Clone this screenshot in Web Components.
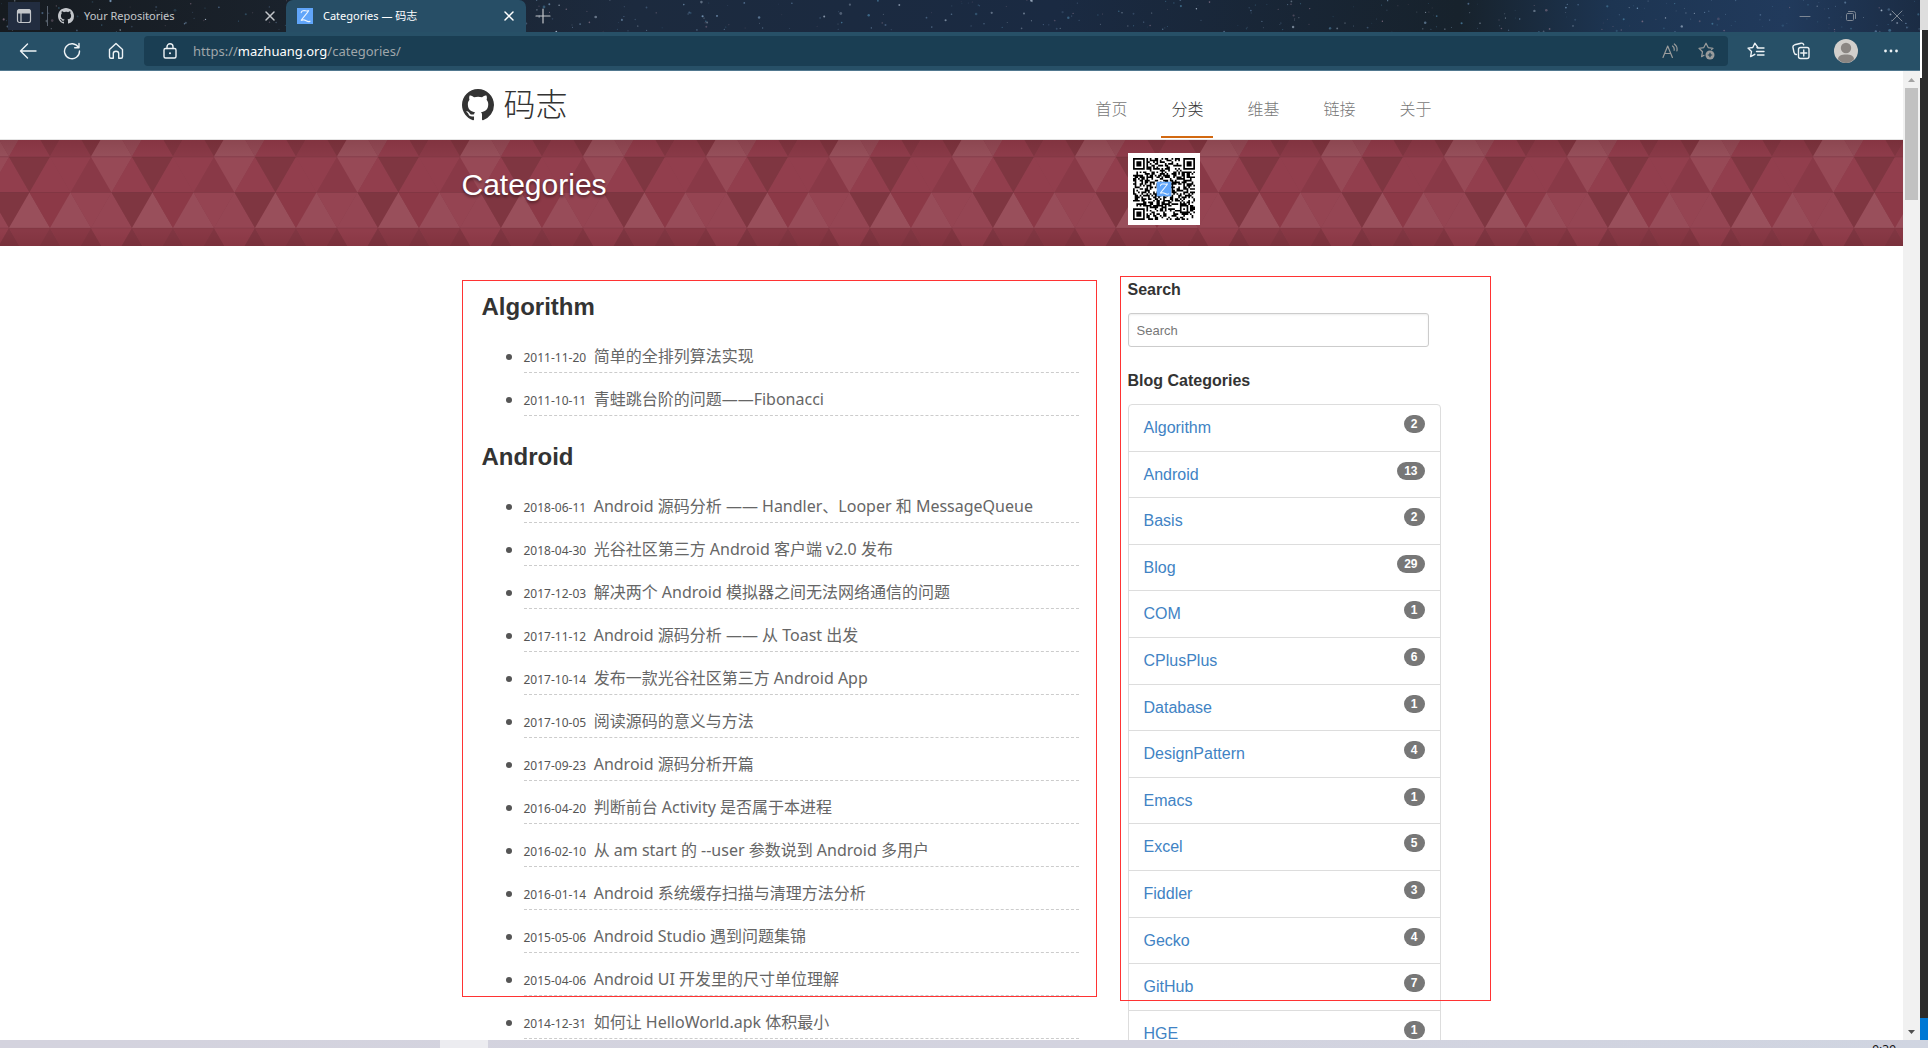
<!DOCTYPE html>
<html lang="zh-CN">
<head>
<meta charset="utf-8">
<title>Categories — 码志</title>
<style>
  html, body { margin: 0; height: 100%; overflow: hidden; background: #2b2b2b; }
  body { font-family: "Liberation Sans", "Noto Sans CJK SC", sans-serif; color: #333; }
</style>
</head>
<body>
<desktop-screen>
  <browser-window></browser-window>
</desktop-screen>

<script>
const UI_FONT = '"Noto Sans", "Noto Sans CJK SC", sans-serif';
const BASE = `*{box-sizing:border-box} button{all:unset;box-sizing:border-box;cursor:pointer;display:flex;align-items:center;justify-content:center} svg{display:block;flex:none}`;

function define(name, render) {
  customElements.define(name, class extends HTMLElement {
    constructor() { super(); this.attachShadow({ mode: 'open' }); }
    connectedCallback() {
      const t = document.createElement('template');
      t.innerHTML = render(this);
      this.shadowRoot.replaceChildren(t.content.cloneNode(true));
    }
  });
}

function random(seed) {
  return () => { seed = (seed * 1664525 + 1013904223) % 4294967296; return seed / 4294967296; };
}

/* ---------- icons ---------- */
const line = (body, w = 1.2) => `<g fill="none" stroke="currentColor" stroke-width="${w}" stroke-linecap="round" stroke-linejoin="round">${body}</g>`;
const ICONS = {
  github: [16, '<path fill="currentColor" d="M8 0C3.58 0 0 3.58 0 8c0 3.54 2.29 6.53 5.47 7.59.4.07.55-.17.55-.38 0-.19-.01-.82-.01-1.49-2.01.37-2.53-.49-2.69-.94-.09-.23-.48-.94-.82-1.13-.28-.15-.68-.52-.01-.53.63-.01 1.08.58 1.23.82.72 1.21 1.87.87 2.33.66.07-.52.28-.87.51-1.07-1.78-.2-3.64-.89-3.64-3.95 0-.87.31-1.59.82-2.15-.08-.2-.36-1.02.08-2.12 0 0 .67-.21 2.2.82.64-.18 1.32-.27 2-.27s1.36.09 2 .27c1.53-1.04 2.2-.82 2.2-.82.44 1.1.16 1.92.08 2.12.51.56.82 1.27.82 2.15 0 3.07-1.87 3.75-3.65 3.95.29.25.54.73.54 1.48 0 1.07-.01 1.93-.01 2.2 0 .21.15.46.55.38A8.01 8.01 0 0 0 16 8c0-4.42-3.58-8-8-8z"/>'],
  site: [16, '<rect width="16" height="16" fill="#60a5fa"/><path d="M4.2 4.6C4.6 2.6 7 2.4 8.6 2.8s2.6.2 3.2-.4C10 5.6 6 9.400 4 12.600c2-1.200 3.600-.8 5.200.2s2.600 1.200 3.800.4" fill="none" stroke="#eaf4ff" stroke-width="1.100" stroke-linecap="round"/>'],
  tabs: [16, line('<rect x="1.500" y="1.500" width="13" height="13" rx="2"/><path d="M5 5v9.500"/>') + '<path fill="currentColor" d="M1.500 3a2 2 0 0 1 2-2h9a2 2 0 0 1 2 2v2.500h-13z"/>'],
  close: [12, line('<path d="M2 2l8 8M10 2l-8 8"/>', 1.5)],
  plus: [16, line('<path d="M8 1v14M1 8h14"/>')],
  back: [18, line('<path d="M17 9H1.500M8.500 2L1.500 9l7 7"/>', 1.400)],
  refresh: [18, line('<path d="M15.500 5.500A7.500 7.500 0 1 0 16.500 9M16 1.500v4.300h-4.300"/>', 1.400)],
  home: [18, line('<path d="M2.500 7.500L9 1.600l6.500 5.900v7.300c0 1-.5 1.500-1.400 1.500h-2.400V11.500c0-1.600-1-2.300-2.700-2.300s-2.700.7-2.700 2.300v4.800H3.900c-.9 0-1.400-.5-1.400-1.500z"/>', 1.400)],
  lock: [16, line('<rect x="2" y="5.500" width="12" height="9.500" rx="1.500"/><path d="M5 5.500V3.800a3 3 0 0 1 6 0v1.700"/>', 1.400) + '<circle cx="8" cy="10.200" r="1" fill="currentColor"/>'],
  read: [16, line('<path d="M1 14.500L5.700 3l4.700 11.500M2.700 10.500h6"/><path d="M10.500 3c1.500 1 2 2.500 1.600 4.300M12.300 1c2.300 1.600 3.200 4 2.600 7"/>')],
  favadd: [18, line('<path d="M14.500 7.500l1.500-1.200-4.800-.7L9 1.200 6.800 5.600 2 6.300l3.500 3.400-.9 4.900L7 13.300"/>') + '<circle cx="13" cy="13" r="4.500" fill="currentColor"/><path d="M13 10.800v4.400M10.800 13h4.400" stroke="#1a3e53" stroke-width="1.200"/>'],
  favs: [18, line('<path d="M9.800 5.600H11L7.800 1.200 5.800 5.500 1 6.100l3.500 3.400-.9 5.100 4.200-2.300M10.500 6h6.500M9.500 9.500H17M10.500 13H17"/>', 1.400)],
  collect: [18, line('<path d="M4.500 12.500c-1.700 0-2.200-1-2.500-2.200L1 5.500c-.3-1.500.4-2.300 1.700-2.700L9 1.200c1.500-.3 2.300.2 2.700 1.600"/><rect x="6.500" y="5.500" width="10.500" height="11" rx="2"/><path d="M11.750 8v6M8.750 11h6"/>', 1.400)],
  avatar: [24, '<circle cx="12" cy="12" r="12" fill="#d2cfcc"/><circle cx="12" cy="9" r="5.200" fill="#8b8683"/><path fill="#8b8683" d="M4 20.200c0-3.600 3.500-4.700 8-4.700s8 1.100 8 4.700A12 12 0 0 1 12 24a12 12 0 0 1-8-3.800z"/>'],
  more: [16, '<g fill="currentColor"><circle cx="2.500" cy="8" r="1.400"/><circle cx="8" cy="8" r="1.400"/><circle cx="13.500" cy="8" r="1.400"/></g>'],
  min: [12, line('<path d="M1 6.500h10"/>', 1)],
  restore: [12, line('<rect x="1.500" y="3.500" width="7" height="7" rx="1"/><path d="M3.500 1.500h5a2 2 0 0 1 2 2v5"/>', 1)],
  exit: [12, line('<path d="M1 1l10 10M11 1L1 11"/>', 1)],
};
define('ui-icon', el => {
  const [box, body] = ICONS[el.getAttribute('name')];
  const size = el.getAttribute('size') || box;
  return `<style>:host{display:block;flex:none}svg{display:block}</style>
    <svg width="${size}" height="${size}" viewBox="0 0 ${box} ${box}" aria-hidden="true">${body}</svg>`;
});

/* ---------- desktop ---------- */
define('desktop-screen', () => `<style>${BASE}
  :host{display:flex;flex-direction:column;height:100vh}
  .work{flex:1;min-height:0;display:flex}
  ::slotted(browser-window){flex:1;min-width:0}
  .edge{width:8px;display:flex;flex-direction:column;background:#2b2b2b}
  .edge i:nth-child(1){height:30px;background:#dedede}
  .edge i:nth-child(2){height:48px;width:2px;background:#fff}
  .edge i:nth-child(3){margin-top:auto;height:22px;background:#0078d4}
  </style>
  <div class="work"><slot></slot><div class="edge"><i></i><i></i><i></i></div></div>
  <task-bar></task-bar>`);

define('task-bar', () => `<style>${BASE}
  :host{display:flex;height:8px;overflow:hidden;background:linear-gradient(90deg,#d4d3de,#d3d3df 60%,#d0d5e1);padding-right:32px;justify-content:space-between}
  i{width:48px;margin-left:440px;background:#ececf0}
  time{font:12px/14px ${UI_FONT};color:#111;padding-top:3px}
  </style><i></i><time>9:39</time>`);

/* ---------- browser chrome ---------- */
define('star-field', () => {
  const r = random(77); let s = '';
  for (let i = 0; i < 420; i++) {
    const c = ['#8fb4d8', '#5f7fa3', '#c9d8ea', '#9a7f95', '#4f86a8'][Math.floor(r() * 5)];
    s += `<circle cx="${(r() * 1928).toFixed(1)}" cy="${(r() * 32).toFixed(1)}" r="${(0.4 + r() * r() * 1.1).toFixed(2)}" fill="${c}" opacity="${(0.25 + r() * 0.5).toFixed(2)}"/>`;
  }
  return `<style>:host{display:block;overflow:hidden;background:linear-gradient(90deg,#161b20,#1a222c 15%,#1c2a3e 33%,#1a2a42 55%,#17222c 76%,#1d3552 84%,#213a5c 93%,#1b2c44)}svg{display:block}</style>
    <svg width="1928" height="32" aria-hidden="true">${s}</svg>`;
});

define('browser-tab', el => `<style>${BASE}
  :host{display:flex;align-items:center;height:32px;padding:0 10px;gap:10px;color:#c3c6ca;font:11px/16px ${UI_FONT};width:238px}
  :host([active]){padding:0 11px;background:#274e66;color:#fff;border-radius:7px 7px 0 0;width:240px}
  .t{flex:1;white-space:nowrap}
  </style>
  <ui-icon name="${el.getAttribute('icon')}" size="16"></ui-icon><span class="t"><slot></slot></span>
  <button aria-label="Close tab"><ui-icon name="close"></ui-icon></button>`);

define('tab-strip', () => `<style>${BASE}
  :host{display:flex;position:relative;height:32px;overflow:hidden;color:#c3c6ca}
  star-field{position:absolute;inset:0}
  .row{position:relative;flex:1;display:flex;align-items:center}
  .menu{width:32px;height:28px;margin-left:8px;background:#222d40}
  .sep{width:1px;height:20px;margin:0 0 0 7px;background:#59626e}
  .new{width:34px;height:32px}
  .win{margin-left:auto;display:flex;color:#7d8794}
  .win button{width:46px;height:32px}
  </style>
  <star-field></star-field>
  <div class="row">
    <button class="menu" aria-label="Tab actions"><ui-icon name="tabs"></ui-icon></button><span class="sep"></span>
    <browser-tab icon="github">Your Repositories</browser-tab>
    <browser-tab icon="site" active>Categories — 码志</browser-tab>
    <button class="new" aria-label="New tab"><ui-icon name="plus"></ui-icon></button>
    <div class="win">
      <button aria-label="Minimize"><ui-icon name="min"></ui-icon></button>
      <button aria-label="Restore"><ui-icon name="restore"></ui-icon></button>
      <button aria-label="Close"><ui-icon name="exit"></ui-icon></button>
    </div>
  </div>`);

define('tool-bar', () => `<style>${BASE}
  :host{display:flex;align-items:center;height:39px;padding:0 7px 0 6px;background:#275067;border-bottom:1px solid #51788f;color:#eef3f6}
  button{width:44px;height:30px}
  .bar{flex:1;display:flex;align-items:center;height:30px;margin:0 5px 0 6px;padding:0 4px 0 18px;background:#1a3e53;border-radius:4px}
  .bar button{width:36px;color:#9a9c9c}
  .url{flex:1;margin-left:15px;font:13px/20px ${UI_FONT};color:#9fa6aa;white-space:nowrap}
  .url b{font-weight:400;color:#fff}
  .end{width:45px}
  </style>
  <button aria-label="Back"><ui-icon name="back"></ui-icon></button>
  <button aria-label="Refresh"><ui-icon name="refresh"></ui-icon></button>
  <button aria-label="Home"><ui-icon name="home"></ui-icon></button>
  <div class="bar">
    <ui-icon name="lock"></ui-icon>
    <div class="url" role="textbox" aria-label="Address">https://<b>mazhuang.org</b>/categories/</div>
    <button aria-label="Read aloud"><ui-icon name="read"></ui-icon></button>
    <button aria-label="Add to favorites"><ui-icon name="favadd"></ui-icon></button>
  </div>
  <button class="end" aria-label="Favorites"><ui-icon name="favs"></ui-icon></button>
  <button class="end" aria-label="Collections"><ui-icon name="collect"></ui-icon></button>
  <button class="end" aria-label="Profile"><ui-icon name="avatar"></ui-icon></button>
  <button class="end" aria-label="Settings and more"><ui-icon name="more"></ui-icon></button>`);

define('scroll-rail', () => `<style>${BASE}
  :host{width:17px;display:flex;flex-direction:column;align-items:center;background:#f1f1f1}
  button{width:17px;height:17px}
  .thumb{width:13px;height:112px;background:#c1c1c1}
  .down{margin-top:auto}
  </style>
  <button aria-label="Scroll up"><svg width="7" height="4"><path fill="#a3a3a3" d="M0 4l3.500-4L7 4z"/></svg></button>
  <div class="thumb"></div>
  <button class="down" aria-label="Scroll down"><svg width="7" height="4"><path fill="#505050" d="M0 0l3.500 4L7 0z"/></svg></button>`);

define('browser-window', () => `<style>${BASE}
  :host{display:flex;flex-direction:column}
  .view{flex:1;min-height:0;display:flex;background:#fff}
  blog-page{flex:1;min-width:0}
  </style>
  <tab-strip></tab-strip><tool-bar></tool-bar>
  <div class="view"><blog-page></blog-page><scroll-rail></scroll-rail></div>`);

/* ---------- blog ---------- */
define('site-header', () => `<style>${BASE}
  :host{display:block;border-bottom:1px solid #e5e5e5;background:#fff}
  .in{max-width:980px;margin:0 auto;height:68px;display:flex;justify-content:space-between}
  a{text-decoration:none;color:#777}
  .logo{display:flex;align-items:center;gap:10px;color:#333;font-size:32px;line-height:40px;font-weight:300}
  nav{display:flex;gap:24px;align-items:flex-end;padding-bottom:1px}
  nav a{padding:0 10px 14px;border-bottom:2px solid transparent;font-size:16px;line-height:24px;font-weight:300}
  nav a.on{color:#333;border-color:#d26911}
  </style>
  <div class="in">
    <a class="logo" href="#"><ui-icon name="github" size="32"></ui-icon><span>码志</span></a>
    <nav><a href="#">首页</a><a href="#" class="on">分类</a><a href="#">维基</a><a href="#">链接</a><a href="#">关于</a></nav>
  </div>`);

define('triangle-pattern', () => {
  const H = 36, W = 41;
  /* Each row: y of its top edge, x of its first upper vertex, [down, up, down, up, down, up] fills. */
  const rows = [
    [-19, -20.5, ['#7d3540', '#96505b', '#914a56', '#8f3c4b', '#803642', '#8a3a48']],
    [17, 0, ['#974956', '#923e4d', '#7f3641', '#923e4d', '#923e4d', '#893947']],
    [52.5, 20.5, ['#7f3641', '#994f5b', '#8c3947', '#984c59', '#954452', '#954553']],
    [88, 0, ['#903d4b', '#7e3541', '#883946', '#803642', '#883845', '#803541']],
  ];
  let s = '';
  for (const [y, x0, c] of rows) {
    for (const shift of [-123, 0, 123]) c.forEach((f, i) => {
      const x = x0 + shift + Math.floor(i / 2) * W, b = y + H - 0.5;
      s += i % 2
        ? `<path fill="${f}" d="M${x + W} ${y}L${x + W * 1.5} ${b}H${x + W / 2}z"/>`
        : `<path fill="${f}" d="M${x} ${y}H${x + W}L${x + W / 2} ${b}z"/>`;
    });
    s += `<path d="M0 ${y}h123" stroke="#000" stroke-opacity=".08"/>`;
  }
  return `<style>:host{display:block}svg{display:block}</style>
  <svg width="100%" height="100%" aria-hidden="true"><defs>
    <pattern id="t" x="-32" y="0" width="123" height="106" patternUnits="userSpaceOnUse"><rect width="123" height="106" fill="#8a3a48"/>${s}</pattern>
    <linearGradient id="g" x2="0" y2="1"><stop offset="0" stop-color="#400" stop-opacity=".12"/><stop offset=".16" stop-color="#400" stop-opacity="0"/><stop offset=".86" stop-color="#400" stop-opacity="0"/><stop offset="1" stop-color="#400" stop-opacity=".1"/></linearGradient></defs>
    <rect width="100%" height="106" fill="url(#t)"/><rect width="100%" height="106" fill="url(#g)"/></svg>`;
});

define('qr-code', () => {
  const n = 37, r = random(2024); let d = '';
  const corner = (x, y) => (x < 8 && y < 8) || (x > n - 9 && y < 8) || (x < 8 && y > n - 9);
  for (let y = 0; y < n; y++) for (let x = 0; x < n; x++) {
    const dark = r() < 0.5, dx = Math.abs(x - 30), dy = Math.abs(y - 30), ring = Math.max(dx, dy);
    if (corner(x, y)) continue;
    if (ring <= 2 ? ring !== 1 : dark) d += `M${x} ${y}h1v1h-1z`;
  }
  const eye = (x, y) => `<path fill-rule="evenodd" d="M${x} ${y}h7v7h-7zM${x + 1} ${y + 1}v5h5v-5zM${x + 2} ${y + 2}h3v3h-3z"/>`;
  return `<style>:host{display:block}svg{display:block}</style>
  <svg width="72" height="72" viewBox="-3 -3 43 43" role="img" aria-label="QR"><rect x="-3" y="-3" width="43" height="43" fill="#fff"/>
    <path d="${d}"/>${eye(0, 0)}${eye(30, 0)}${eye(0, 30)}
    <svg x="14" y="14" width="9" height="9" viewBox="0 0 16 16">${ICONS.site[1]}</svg></svg>`;
});

define('page-banner', () => `<style>${BASE}
  :host{display:block;position:relative;height:106px}
  triangle-pattern{position:absolute;inset:0}
  .in{position:relative;max-width:980px;margin:0 auto;display:flex;padding-top:13px}
  .txt{flex:1}
  h1{margin:14px 0 0;font-size:30px;line-height:36px;font-weight:400;color:#fff;text-shadow:0 2px 3px rgba(0,0,0,.45)}
  .side{width:314px}
  </style>
  <triangle-pattern></triangle-pattern>
  <div class="in"><div class="txt"><h1><slot></slot></h1></div><div class="side"><qr-code></qr-code></div></div>`);

const POSTS = [
  ['Algorithm', [['2011-11-20', '简单的全排列算法实现'], ['2011-10-11', '青蛙跳台阶的问题——Fibonacci']]],
  ['Android', [
    ['2018-06-11', 'Android 源码分析 —— Handler、Looper 和 MessageQueue'],
    ['2018-04-30', '光谷社区第三方 Android 客户端 v2.0 发布'],
    ['2017-12-03', '解决两个 Android 模拟器之间无法网络通信的问题'],
    ['2017-11-12', 'Android 源码分析 —— 从 Toast 出发'],
    ['2017-10-14', '发布一款光谷社区第三方 Android App'],
    ['2017-10-05', '阅读源码的意义与方法'],
    ['2017-09-23', 'Android 源码分析开篇'],
    ['2016-04-20', '判断前台 Activity 是否属于本进程'],
    ['2016-02-10', '从 am start 的 --user 参数说到 Android 多用户'],
    ['2016-01-14', 'Android 系统缓存扫描与清理方法分析'],
    ['2015-05-06', 'Android Studio 遇到问题集锦'],
    ['2015-04-06', 'Android UI 开发里的尺寸单位理解'],
    ['2014-12-31', '如何让 HelloWorld.apk 体积最小'],
  ]],
];
define('post-group', el => {
  const [title, posts] = POSTS[el.getAttribute('index')];
  return `<style>${BASE}
  :host{display:block}
  h2{margin:0 0 5px;font-size:24px;line-height:36px;font-weight:700;color:#333}
  ul{margin:0;padding:0 0 0 42px;font-family:${UI_FONT};color:#555}
  li{height:43px;padding:15px 0 5px;border-bottom:1px dashed #ccc;font-size:16px;line-height:22px;white-space:nowrap}
  time{display:inline-block;min-width:66px;font-size:12px;line-height:16px}
  a{color:#666;text-decoration:none}
  </style>
  <h2>${title}</h2>
  <ul>${posts.map(([d, t]) => `<li><time datetime="${d}">${d}</time> <a href="#">${t}</a></li>`).join('')}</ul>`;
});

const CATEGORIES = [['Algorithm', 2], ['Android', 13], ['Basis', 2], ['Blog', 29], ['COM', 1], ['CPlusPlus', 6], ['Database', 1], ['DesignPattern', 4], ['Emacs', 1], ['Excel', 5], ['Fiddler', 3], ['Gecko', 4], ['GitHub', 7], ['HGE', 1]];
define('category-list', () => `<style>${BASE}
  :host{display:block}
  ul{list-style:none;margin:0;padding:0;border:1px solid #ddd;border-radius:4px}
  a{display:flex;justify-content:space-between;align-items:flex-start;padding:10px 15px;font-size:16px;line-height:1.6;color:#4183c4;text-decoration:none}
  li+li{border-top:1px solid #ddd}
  .n{padding:3px 7px;border-radius:10px;background:#777;color:#fff;font-size:12px;line-height:12px;font-weight:700}
  </style>
  <ul>${CATEGORIES.map(([c, n]) => `<li><a href="#"><span>${c}</span><span class="n">${n}</span></a></li>`).join('')}</ul>`);

define('side-column', () => `<style>${BASE}
  :host{display:block}
  h3{margin:0;font-size:16px;line-height:20px;font-weight:700;color:#333}
  h3 label{display:block}
  input{display:block;width:301px;height:34px;margin:13px 0 24px;padding:0 8px;border:1px solid #ccc;border-radius:3px;font:13px/20px "Liberation Sans",sans-serif;color:#333;outline:none;box-shadow:inset 0 1px 2px rgba(0,0,0,.075)}
  input::placeholder{color:#777;opacity:1}
  category-list{margin-top:13px}
  </style>
  <h3><label for="q">Search</label></h3>
  <input id="q" type="text" placeholder="Search">
  <h3>Blog Categories</h3>
  <category-list></category-list>`);

define('blog-page', () => `<style>${BASE}
  :host{display:block;overflow:hidden;background:#fff}
  .cols{max-width:980px;margin:0 auto;display:flex;justify-content:space-between}
  .main,.side{position:relative}
  .main{width:637px;padding:43px 20px 0;display:flex;flex-direction:column;gap:23px}
  .side{width:314px;padding:34px 1px 0 0}
  .mark{position:absolute;border:1px solid #f33;pointer-events:none}
  .main .mark{left:0;top:34px;width:635px;height:717px}
  .side .mark{left:-8px;top:30px;width:371px;height:725px}
  </style>
  <site-header></site-header>
  <page-banner>Categories</page-banner>
  <div class="cols">
    <main class="main"><post-group index="0"></post-group><post-group index="1"></post-group><div class="mark"></div></main>
    <aside class="side"><side-column></side-column><div class="mark"></div></aside>
  </div>`);
</script>
</body>
</html>
